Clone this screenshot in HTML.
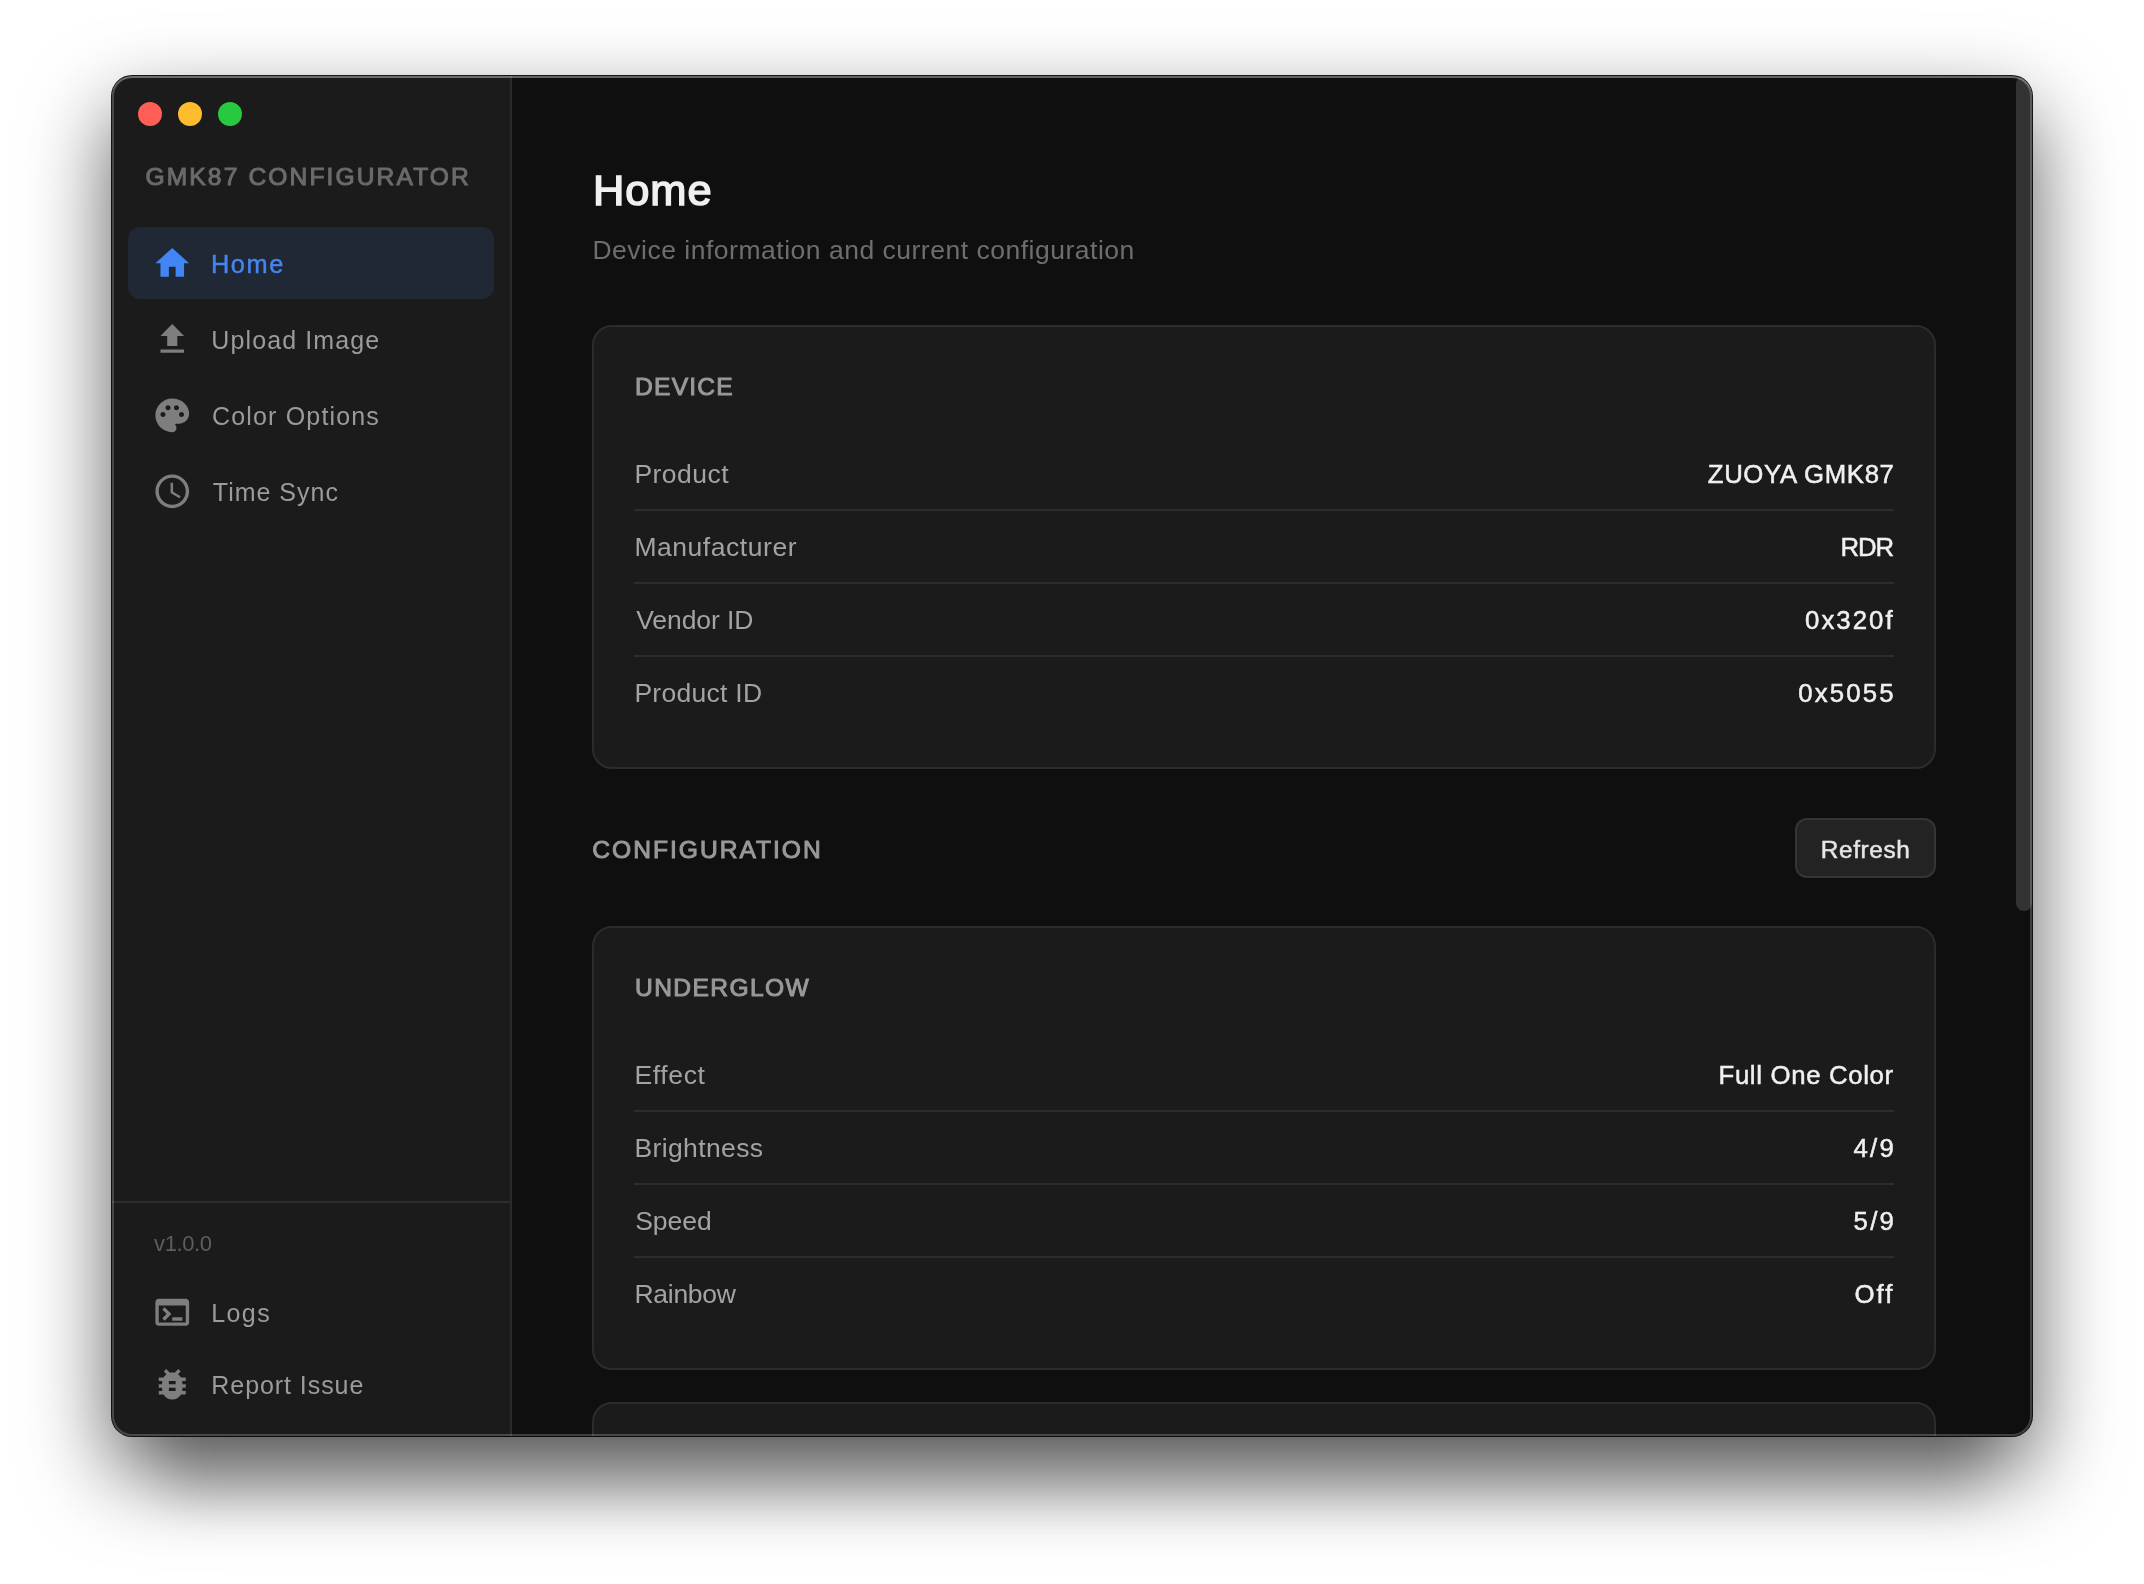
<!DOCTYPE html><html lang="en"><head><meta charset="utf-8"><title>GMK87 Configurator</title><style>
html,body{margin:0;padding:0}
body{width:2144px;height:1584px;background:#fff;overflow:hidden;position:relative;font-family:'Liberation Sans',sans-serif}
.win{position:absolute;left:112px;top:76px;width:1920px;height:1360px;border-radius:20px;background:#0f0f0f;
 box-shadow:0 0 0 1px rgba(0,0,0,.9)}
.shadow{position:absolute;left:112px;top:76px;width:1920px;height:1360px;border-radius:20px;box-shadow:0 36px 84px rgba(0,0,0,.65), 0 125px 44px -60px rgba(0,0,0,.11)}
.clip{position:absolute;inset:0;border-radius:20px;overflow:hidden}
.edge{position:absolute;inset:0;border-radius:20px;box-shadow:inset 0 0 0 2px rgba(255,255,255,.2), inset 0 2px 0 0 rgba(255,255,255,.2);pointer-events:none}
.side{position:absolute;left:0;top:0;width:398px;height:1360px;background:#1b1b1b;border-right:2px solid #2b2b2b}
.sdiv{position:absolute;left:0;top:1125px;width:398px;height:2px;background:#2d2d2d}
.tl{position:absolute;top:26px;width:24px;height:24px;border-radius:50%}
.act{position:absolute;left:16px;top:151px;width:366px;height:72px;border-radius:12px;background:#1f2834}
.txt{position:absolute;left:0;top:0;width:1920px;height:1360px;will-change:transform}
.t{position:absolute;white-space:pre;margin:0;padding:0;font-weight:400;text-decoration:none;display:block}
dl{margin:0}
.ic{position:absolute}
.card{position:absolute;left:480px;width:1340px;height:440px;border:2px solid #2c2c2c;border-radius:20px;background:#1b1b1b}
.hr{position:absolute;left:522px;width:1260px;height:2px;background:#2c2c2c}
.btn{position:absolute;left:1683px;top:742px;width:137px;height:56px;border:2px solid #353535;border-radius:12px;background:#232323}
.thumb{position:absolute;left:1904px;top:0;width:16px;height:835px;border-radius:8px;background:#333}
</style></head><body>
<div class="shadow"></div>
<div class="win"><div class="clip">
<!-- window chrome / surfaces -->
<div class="side"></div><div class="sdiv"></div>
<div class="tl" style="left:26px;background:#ff5f57"></div>
<div class="tl" style="left:66px;background:#febc2e"></div>
<div class="tl" style="left:106px;background:#28c840"></div>
<div class="act"></div>
<div class="card" style="top:249px"></div>
<div class="card" style="top:850px"></div>
<div class="card" style="top:1326px"></div>
<div class="hr" style="top:433px"></div>
<div class="hr" style="top:506px"></div>
<div class="hr" style="top:579px"></div>
<div class="hr" style="top:1034px"></div>
<div class="hr" style="top:1107px"></div>
<div class="hr" style="top:1180px"></div>
<div class="btn"></div>
<div class="thumb"></div>
<!-- content layer -->
<div class="txt">
<aside>
<div class="t" id="apptitle" style="left:33.52px;top:86.42px;font-size:24.6px;line-height:29.52px;color:#6b6b6b;letter-spacing:2.111px;-webkit-text-stroke:1px currentColor">GMK87 CONFIGURATOR</div>
<nav>
<svg class="ic" style="left:39.85px;top:167.05px;width:40.5px;height:40.5px" viewBox="0 0 24 24" aria-hidden="true"><path fill="#4285f4" d="M10 20v-6h4v6h5v-8h3L12 3 2 12h3v8z"/></svg>
<a class="t" id="nav0" style="left:98.92px;top:173.23px;font-size:25.32px;line-height:30.38px;color:#4586f3;letter-spacing:1.646px;-webkit-text-stroke:0.4px currentColor">Home</a>
<svg class="ic" style="left:39.85px;top:242.95px;width:40.5px;height:40.5px" viewBox="0 0 24 24" aria-hidden="true"><path fill="#7e7e7e" d="M9 16h6v-6h4l-7-7-7 7h4zm-4 2h14v2H5z"/></svg>
<a class="t" id="nav1" style="left:99.30px;top:249.04px;font-size:25.0px;line-height:30.00px;color:#9b9b9b;letter-spacing:1.109px">Upload Image</a>
<svg class="ic" style="left:39.85px;top:318.65px;width:40.5px;height:40.5px" viewBox="0 0 24 24" aria-hidden="true"><path fill="#7e7e7e" d="M12 2C6.49 2 2 6.49 2 12s4.49 10 10 10c1.38 0 2.5-1.12 2.5-2.5 0-.61-.23-1.2-.64-1.67-.08-.1-.13-.21-.13-.33 0-.28.22-.5.5-.5H16c3.31 0 6-2.69 6-6 0-4.96-4.49-9-10-9zm5.5 11c-.83 0-1.5-.67-1.5-1.5s.67-1.5 1.5-1.5 1.5.67 1.5 1.5-.67 1.5-1.5 1.5zm-3-4c-.83 0-1.5-.67-1.5-1.5S13.67 6 14.5 6s1.500.67 1.500 1.5S15.33 9 14.5 9zM5 11.5c0-.83.67-1.5 1.5-1.5s1.500.67 1.500 1.5S7.33 13 6.5 13 5 12.33 5 11.5zm6-4c0 .83-.67 1.5-1.5 1.5S8 8.33 8 7.5 8.67 6 9.5 6s1.500.67 1.500 1.5z"/></svg>
<a class="t" id="nav2" style="left:100.05px;top:325.19px;font-size:25.0px;line-height:30.00px;color:#9b9b9b;letter-spacing:1.162px">Color Options</a>
<svg class="ic" style="left:39.85px;top:394.85px;width:40.5px;height:40.5px" viewBox="0 0 24 24" aria-hidden="true"><path fill="#7e7e7e" d="M11.99 2C6.47 2 2 6.48 2 12s4.47 10 9.99 10C17.52 22 22 17.520 22 12S17.520 2 11.99 2zM12 20c-4.42 0-8-3.58-8-8s3.58-8 8-8 8 3.58 8 8-3.58 8-8 8zm.5-13H11v6l5.250 3.150.75-1.23-4.5-2.67z"/></svg>
<a class="t" id="nav3" style="left:100.80px;top:400.54px;font-size:25.0px;line-height:30.00px;color:#9b9b9b;letter-spacing:1.000px">Time Sync</a>
</nav>
<footer>
<span class="t" id="ver" style="left:42.08px;top:1154.78px;font-size:22.0px;line-height:26.40px;color:#5e5e5e;letter-spacing:-0.388px">v1.0.0</span>
<svg class="ic" style="left:39.85px;top:1215.85px;width:40.5px;height:40.5px" viewBox="0 0 24 24" aria-hidden="true"><path fill="#7e7e7e" d="M20 4H4c-1.11 0-2 .9-2 2v12c0 1.1.89 2 2 2h16c1.1 0 2-.9 2-2V6c0-1.1-.89-2-2-2zm0 14H4V8h16v10zm-2-1h-6v-2h6v2zM7.5 17l-1.41-1.41L8.67 13l-2.59-2.59L7.5 9l4 4-4 4z"/></svg>
<a class="t" id="nav4" style="left:99.30px;top:1221.54px;font-size:25.0px;line-height:30.00px;color:#9b9b9b;letter-spacing:1.383px">Logs</a>
<svg class="ic" style="left:39.85px;top:1287.55px;width:40.5px;height:40.5px" viewBox="0 0 24 24" aria-hidden="true"><path fill="#7e7e7e" d="M20 8h-2.81c-.45-.78-1.07-1.45-1.82-1.96L17 4.41 15.59 3l-2.17 2.17C12.96 5.06 12.49 5 12 5c-.49 0-.96.06-1.41.17L8.41 3 7 4.41l1.62 1.63C7.88 6.55 7.26 7.22 6.81 8H4v2h2.09c-.05.33-.09.66-.09 1v1H4v2h2v1c0 .34.04.67.09 1H4v2h2.81c1.04 1.79 2.97 3 5.19 3s4.15-1.21 5.19-3H20v-2h-2.09c.05-.33.09-.66.09-1v-1h2v-2h-2v-1c0-.34-.04-.67-.09-1H20V8zm-6 8h-4v-2h4v2zm0-4h-4v-2h4v2z"/></svg>
<a class="t" id="nav5" style="left:99.30px;top:1293.94px;font-size:25.0px;line-height:30.00px;color:#9b9b9b;letter-spacing:0.936px">Report Issue</a>
</footer>
</aside>
<main>
<header><h1 class="t" id="h1" style="left:481.03px;top:87.74px;font-size:43.43px;line-height:52.12px;color:#f0f0f0;letter-spacing:0.913px;-webkit-text-stroke:1.5px currentColor">Home</h1><p class="t" id="sub" style="left:480.38px;top:158.52px;font-size:26.5px;line-height:31.80px;color:#6e6e6e;letter-spacing:0.511px">Device information and current configuration</p></header>
<section><h2 class="t" id="c1t" style="left:523.03px;top:296.07px;font-size:24.6px;line-height:29.52px;color:#999999;letter-spacing:1.228px;-webkit-text-stroke:1px currentColor">DEVICE</h2><dl>
<dt class="t" id="c1l0" style="left:522.38px;top:382.52px;font-size:26.5px;line-height:31.80px;color:#a3a3a3;letter-spacing:0.485px">Product</dt><dd class="t" id="c1v0" style="left:1595.78px;top:382.95px;font-size:25.78px;line-height:30.94px;color:#f0f0f0;letter-spacing:0.622px;-webkit-text-stroke:0.5px currentColor">ZUOYA GMK87</dd>
<dt class="t" id="c1l1" style="left:522.38px;top:455.77px;font-size:26.5px;line-height:31.80px;color:#a3a3a3;letter-spacing:0.547px">Manufacturer</dt><dd class="t" id="c1v1" style="left:1728.49px;top:456.20px;font-size:25.78px;line-height:30.94px;color:#f0f0f0;letter-spacing:-1.117px;-webkit-text-stroke:0.5px currentColor">RDR</dd>
<dt class="t" id="c1l2" style="left:524.24px;top:528.77px;font-size:26.5px;line-height:31.80px;color:#a3a3a3;letter-spacing:-0.079px">Vendor ID</dt><dd class="t" id="c1v2" style="left:1693.02px;top:529.20px;font-size:25.78px;line-height:30.94px;color:#f0f0f0;letter-spacing:2.058px;-webkit-text-stroke:0.5px currentColor">0x320f</dd>
<dt class="t" id="c1l3" style="left:522.38px;top:601.77px;font-size:26.5px;line-height:31.80px;color:#a3a3a3;letter-spacing:0.283px">Product ID</dt><dd class="t" id="c1v3" style="left:1686.27px;top:602.20px;font-size:25.78px;line-height:30.94px;color:#f0f0f0;letter-spacing:2.171px;-webkit-text-stroke:0.5px currentColor">0x5055</dd>
</dl></section>
<div><h2 class="t" id="cfg" style="left:480.27px;top:758.57px;font-size:24.6px;line-height:29.52px;color:#999999;letter-spacing:1.998px;-webkit-text-stroke:1px currentColor">CONFIGURATION</h2><span class="t" id="btn" style="left:1708.80px;top:758.77px;font-size:24.38px;line-height:29.26px;color:#e6e6e6;letter-spacing:0.597px;-webkit-text-stroke:0.5px currentColor">Refresh</span></div>
<section><h2 class="t" id="c2t" style="left:523.03px;top:897.32px;font-size:24.6px;line-height:29.52px;color:#999999;letter-spacing:1.383px;-webkit-text-stroke:1px currentColor">UNDERGLOW</h2><dl>
<dt class="t" id="c2l0" style="left:522.38px;top:984.02px;font-size:26.5px;line-height:31.80px;color:#a3a3a3;letter-spacing:0.655px">Effect</dt><dd class="t" id="c2v0" style="left:1606.49px;top:984.45px;font-size:25.78px;line-height:30.94px;color:#f0f0f0;letter-spacing:0.661px;-webkit-text-stroke:0.5px currentColor">Full One Color</dd>
<dt class="t" id="c2l1" style="left:522.38px;top:1057.02px;font-size:26.5px;line-height:31.80px;color:#a3a3a3;letter-spacing:0.393px">Brightness</dt><dd class="t" id="c2v1" style="left:1741.43px;top:1057.45px;font-size:25.78px;line-height:30.94px;color:#f0f0f0;letter-spacing:2.335px;-webkit-text-stroke:0.5px currentColor">4/9</dd>
<dt class="t" id="c2l2" style="left:523.17px;top:1130.02px;font-size:26.5px;line-height:31.80px;color:#a3a3a3;letter-spacing:0.008px">Speed</dt><dd class="t" id="c2v2" style="left:1741.52px;top:1130.45px;font-size:25.78px;line-height:30.94px;color:#f0f0f0;letter-spacing:2.293px;-webkit-text-stroke:0.5px currentColor">5/9</dd>
<dt class="t" id="c2l3" style="left:522.38px;top:1203.02px;font-size:26.5px;line-height:31.80px;color:#a3a3a3;letter-spacing:-0.252px">Rainbow</dt><dd class="t" id="c2v3" style="left:1742.56px;top:1203.45px;font-size:25.78px;line-height:30.94px;color:#f0f0f0;letter-spacing:2.030px;-webkit-text-stroke:0.5px currentColor">Off</dd>
</dl></section>
</main>
</div>
</div><div class="edge"></div></div>
</body></html>
